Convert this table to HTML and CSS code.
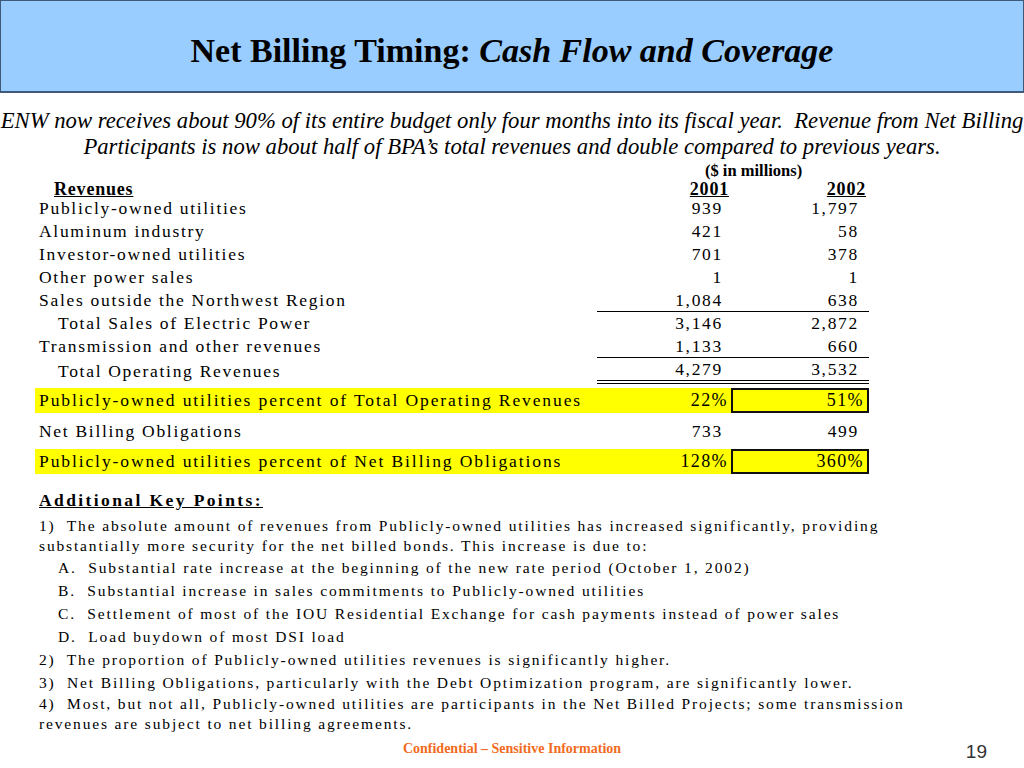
FILE: index.html
```html
<!DOCTYPE html>
<html>
<head>
<meta charset="utf-8">
<link rel="stylesheet" href="styles.css">
</head>
<body>
<div class="slide">
  <header class="title-bar">
    <h1 class="title">Net Billing Timing: <em>Cash Flow and Coverage</em></h1>
  </header>
  <div class="intro">
    <span>ENW now receives about 90% of its entire budget only four months into its fiscal year.&nbsp; Revenue from Net Billing</span>
    <span>Participants is now about half of BPA’s total revenues and double compared to previous years.</span>
  </div>

  <div class="fin">
    <div class="row units"><span></span><span class="units-label">($ in millions)</span></div>
    <div class="row head">
      <span class="h-label">Revenues</span>
      <span class="h-year y1">2001</span>
      <span class="h-year y2">2002</span>
    </div>
    <div class="row data"><span class="lbl">Publicly-owned utilities</span><span class="n1">939</span><span class="n2">1,797</span></div>
    <div class="row data"><span class="lbl">Aluminum industry</span><span class="n1">421</span><span class="n2">58</span></div>
    <div class="row data"><span class="lbl">Investor-owned utilities</span><span class="n1">701</span><span class="n2">378</span></div>
    <div class="row data"><span class="lbl">Other power sales</span><span class="n1">1</span><span class="n2">1</span></div>
    <div class="row data ruled"><span class="lbl">Sales outside the Northwest Region</span><span class="n1">1,084</span><span class="n2">638</span></div>
    <div class="row data"><span class="lbl sub">Total Sales of Electric Power</span><span class="n1">3,146</span><span class="n2">2,872</span></div>
    <div class="row data ruled"><span class="lbl">Transmission and other revenues</span><span class="n1">1,133</span><span class="n2">660</span></div>
    <div class="row data total"><span class="lbl sub">Total Operating Revenues</span><span class="n1">4,279</span><span class="n2">3,532</span></div>

    <div class="row pct first"><span class="lbl">Publicly-owned utilities percent of Total Operating Revenues</span><span class="p1">22%</span><span class="p2">51%</span></div>
    <div class="row data nbo"><span class="lbl">Net Billing Obligations</span><span class="n1">733</span><span class="n2">499</span></div>
    <div class="row pct second"><span class="lbl">Publicly-owned utilities percent of Net Billing Obligations</span><span class="p1">128%</span><span class="p2">360%</span></div>
  </div>

  <section class="points">
    <h2 class="kp">Additional Key Points:</h2>
    <p class="pt pt-1">1)&nbsp; The absolute amount of revenues from Publicly-owned utilities has increased significantly, providing substantially more security for the net billed bonds. This increase is due to:</p>
    <p class="pt sub-pt">A.&nbsp; Substantial rate increase at the beginning of the new rate period (October 1, 2002)</p>
    <p class="pt sub-pt">B.&nbsp; Substantial increase in sales commitments to Publicly-owned utilities</p>
    <p class="pt sub-pt">C.&nbsp; Settlement of most of the IOU Residential Exchange for cash payments instead of power sales</p>
    <p class="pt sub-pt">D.&nbsp; Load buydown of most DSI load</p>
    <p class="pt">2)&nbsp; The proportion of Publicly-owned utilities revenues is significantly higher.</p>
    <p class="pt">3)&nbsp; Net Billing Obligations, particularly with the Debt Optimization program, are significantly lower.</p>
    <p class="pt pt-4">4)&nbsp; Most, but not all, Publicly-owned utilities are participants in the Net Billed Projects; some transmission revenues are subject to net billing agreements.</p>
  </section>

  <footer class="foot">
    <span></span>
    <span class="conf">Confidential – Sensitive Information</span>
    <span class="page">19</span>
  </footer>
</div>
</body>
</html>
```

FILE: styles.css
```css
html, body { margin: 0; padding: 0; background: #fff; }
body { color: #000; font-family: "Liberation Serif", "Tinos", "Times New Roman", "Nimbus Roman", "DejaVu Serif", serif; }

.slide {
  width: 1024px;
  height: 768px;
  overflow: hidden;
  display: flex;
  flex-direction: column;
  font-family: "Liberation Serif", "Tinos", "Times New Roman", "Nimbus Roman", "DejaVu Serif", serif;
}

.title-bar {
  box-sizing: border-box;
  height: 93px;
  flex: none;
  background: #99ccff;
  border: 1px solid #3f5a78;
  border-bottom-width: 2px;
  display: flex;
  align-items: center;
  justify-content: center;
  padding-top: 10px;
}
.title {
  margin: 0;
  font-size: 34px;
  font-weight: bold;
  line-height: 1;
}
.title em { font-style: italic; }

.intro {
  margin-top: 15px;
  display: flex;
  flex-direction: column;
  align-items: center;
  font-style: italic;
  font-size: 22.7px;
  line-height: 26px;
}
.intro span { white-space: nowrap; }

.fin { margin-left: 35px; width: 834px; }
.row {
  box-sizing: border-box;
  display: grid;
  grid-template-columns: 562px 134px 138px;
  align-items: center;
  white-space: nowrap;
}

.units { height: 18px; margin-top: 1px; }
.units-label { grid-column: 2 / 4; font-weight: bold; font-size: 16.5px; padding-left: 108px; }

.head { height: 18px; font-weight: bold; font-size: 18px; letter-spacing: 0.8px; }
.h-label { padding-left: 19px; text-decoration: underline; }
.h-year { text-decoration: underline; text-align: right; }
.y1 { padding-right: 2px; }
.y2 { padding-right: 3px; }

.data { height: 23px; font-size: 17.5px; letter-spacing: 1.7px; }
.lbl { padding-left: 4px; }
.lbl.sub { padding-left: 23px; }
.n1, .n2 { box-sizing: border-box; height: 100%; display: flex; align-items: center; justify-content: flex-end; }
.n1 { padding-right: 8px; }
.n2 { padding-right: 10px; }
.ruled .n1, .ruled .n2 { border-bottom: 1px solid #000; }
.total { height: 26px; }
.total .n1, .total .n2 { border-bottom: 4px double #000; }

.pct { height: 25px; font-size: 17.5px; letter-spacing: 1.9px; background: #ffff00; }
.pct.first { margin-top: 4px; }
.pct.second { margin-top: 6px; }
.nbo { height: 24px; margin-top: 6px; }
.p1, .p2 { font-size: 18px; letter-spacing: 1.4px; }
.p1 { text-align: right; padding-right: 3px; }
.p2 { box-sizing: border-box; padding-right: 3px; height: 100%; border: 2px solid #111; display: flex; align-items: center; justify-content: flex-end; }

.points { margin-left: 39px; margin-top: 15px; }
.kp { margin: 0; font-size: 17.5px; line-height: 22px; font-weight: bold; text-decoration: underline; letter-spacing: 2.4px; }
.pt { margin: 0; font-size: 15.5px; line-height: 23px; letter-spacing: 1.85px; width: 880px; }
.pt-1 { line-height: 20px; margin-top: 5px; }
.pt-4 { line-height: 20px; }
.sub-pt { padding-left: 19px; }

.foot { height: 30px; flex: none; margin-top: auto; margin-bottom: 4px; display: grid; grid-template-columns: 1fr auto 1fr; align-items: center; }
.conf { color: #f26b1d; font-weight: bold; font-size: 14px; }
.page { justify-self: end; padding-right: 37px; padding-top: 6px; font-family: "Liberation Sans", Arial, sans-serif; font-size: 19px; color: #333; }
.slide::after { content: ""; display: block; height: 2px; flex: none; background: #ececec; }
```
